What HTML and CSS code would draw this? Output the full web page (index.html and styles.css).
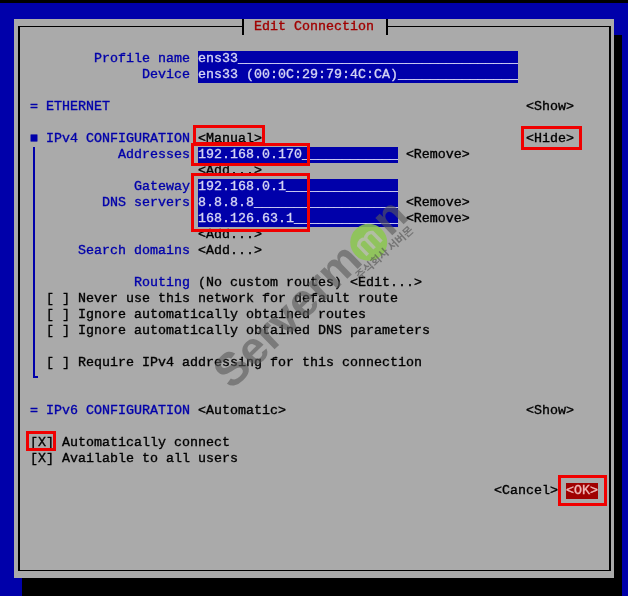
FILE: index.html
```html
<!DOCTYPE html>
<html lang="en">
<head>
<meta charset="utf-8">
<title>Edit Connection</title>
<link rel="stylesheet" href="styles.css">
</head>
<body>
<div class="screen">
  <div class="topbar"></div>
  <div class="dialog">
    <div class="title">Edit Connection</div>
    <div class="frame">
      <div class="row"><span class="label">Profile name</span><span class="field wide">ens33___________________________________</span></div>
      <div class="row"><span class="label">Device</span><span class="field wide">ens33 (00:0C:29:79:4C:CA)_______________</span></div>
      <div class="row"></div>
      <div class="row section"><span class="heading">= ETHERNET</span><span class="end">&lt;Show&gt;</span></div>
      <div class="row"></div>
      <div class="row section"><span class="heading"><span class="mark">■</span> IPv4 CONFIGURATION</span><span class="value">&lt;Manual&gt;</span><span class="end">&lt;Hide&gt;</span></div>
      <div class="ipv4">
        <div class="row"><span class="label">Addresses</span><span class="field">192.168.0.170____________</span><span class="value">&lt;Remove&gt;</span></div>
        <div class="row"><span class="label"></span><span class="value">&lt;Add...&gt;</span></div>
        <div class="row"><span class="label">Gateway</span><span class="field">192.168.0.1______________</span></div>
        <div class="row"><span class="label">DNS servers</span><span class="field">8.8.8.8__________________</span><span class="value">&lt;Remove&gt;</span></div>
        <div class="row"><span class="label"></span><span class="field">168.126.63.1_____________</span><span class="value">&lt;Remove&gt;</span></div>
        <div class="row"><span class="label"></span><span class="value">&lt;Add...&gt;</span></div>
        <div class="row"><span class="label">Search domains</span><span class="value">&lt;Add...&gt;</span></div>
        <div class="row"></div>
        <div class="row"><span class="label">Routing</span><span class="value">(No custom routes) &lt;Edit...&gt;</span></div>
        <div class="row check">[ ] Never use this network for default route</div>
        <div class="row check">[ ] Ignore automatically obtained routes</div>
        <div class="row check">[ ] Ignore automatically obtained DNS parameters</div>
        <div class="row"></div>
        <div class="row check">[ ] Require IPv4 addressing for this connection</div>
        <div class="row"></div>
      </div>
      <div class="row"></div>
      <div class="row section"><span class="heading">= IPv6 CONFIGURATION</span><span class="value">&lt;Automatic&gt;</span><span class="end">&lt;Show&gt;</span></div>
      <div class="row"></div>
      <div class="row section">[X] Automatically connect</div>
      <div class="row section">[X] Available to all users</div>
      <div class="row"></div>
      <div class="row buttons"><span>&lt;Cancel&gt;</span><span class="value ok">&lt;OK&gt;</span></div>
    </div>
  </div>

  <div class="mark-box box-manual"></div>
  <div class="mark-box box-address"></div>
  <div class="mark-box box-dns"></div>
  <div class="mark-box box-hide"></div>
  <div class="mark-box box-auto"></div>
  <div class="mark-box box-ok"></div>

  <div class="watermark">
    <span class="wm-text">Serverm</span>
    <svg class="wm-logo" width="37" height="37" viewBox="0 0 37 37">
      <circle cx="18.500" cy="18.500" r="18.500" fill="#8cc850"/>
      <path d="M9 27V14c3-3 7-3 9.500 0v13M18.500 14c3-3 7-3 9.500 0v13" fill="none" stroke="#b4c2a2" stroke-width="3.500"/>
    </svg>
    <span class="wm-text">n</span>
  </div>
  <div class="wm-sub">주식회사 서버몬</div>
</div>
</body>
</html>
```
FILE: styles.css
```css
* { box-sizing: border-box; }
html, body { margin: 0; height: 100%; overflow: hidden; }
.screen {
  position: relative;
  width: 628px;
  height: 596px;
  overflow: hidden;
  background: #0000aa;
  font: 13.33px/16px "Liberation Mono", monospace;
  -webkit-text-stroke: 0.35px currentColor;
  color: #000;
  filter: blur(0.35px);
}
.topbar { height: 3px; background: #000; }
.dialog {
  position: relative;
  width: 600px;
  margin: 16px 0 0 14px;
  padding: 7px 3px 7px 4px;
  background: #aaa;
  box-shadow: 8px 16px 0 #000, 8px 18px 0 #000;
}
.frame {
  border: solid #000;
  border-width: 1px 2px;
  padding: 24px 0 71px;
}
.title {
  position: absolute;
  left: 228px;
  top: 0;
  width: 146px;
  height: 16px;
  padding-left: 10px;
  background: #aaa;
  border: solid #000;
  border-width: 0 2px;
  color: #a00000;
  white-space: pre;
}
.row {
  display: flex;
  height: 16px;
  padding: 0 35px 0 2px;
  white-space: pre;
}
.label { width: 21ch; text-align: right; color: #0000aa; }
.value { margin-left: 1ch; }
.field {
  width: 25ch;
  margin-left: 1ch;
  background: #0000aa;
  color: #d4d4f4;
  overflow: hidden;
}
.field.wide { width: 40ch; }
.section { padding-left: 10px; }
.heading { color: #0000aa; }
.mark { display: inline-block; width: 8px; }
.end { margin-left: auto; }
.ipv4 {
  background:
    linear-gradient(#0000aa, #0000aa) no-repeat 13px 0 / 2px 231px,
    linear-gradient(#0000aa, #0000aa) no-repeat 13px 229px / 5px 2px;
}
.check { padding-left: 26px; }
.buttons { justify-content: flex-end; padding-right: 11px; }
.ok { background: #a00000; color: #f0b8b8; }

.mark-box { position: absolute; border: 3px solid #f00000; }
.box-manual { left: 193px; top: 125px; width: 72px; height: 20px; }
.box-address { left: 191px; top: 143px; width: 119px; height: 23px; }
.box-dns { left: 191px; top: 173px; width: 119px; height: 59px; }
.box-hide { left: 521px; top: 126px; width: 61px; height: 24px; }
.box-auto { left: 26px; top: 431px; width: 30px; height: 20px; }
.box-ok { left: 558px; top: 475px; width: 49px; height: 31px; }

.watermark {
  position: absolute;
  left: 238px;
  top: 347px;
  display: flex;
  align-items: center;
  height: 50px;
  transform: rotate(-44deg);
  transform-origin: 0 100%;
  font: bold 46px/50px "Liberation Sans", sans-serif;
  -webkit-text-stroke: 0;
  color: rgba(90, 90, 90, 0.6);
}
.wm-logo { flex: none; opacity: 0.85; margin: 8px 0 0 -1px; }
.wm-sub {
  position: absolute;
  left: 347px;
  top: 245px;
  transform: rotate(-42deg);
  font: bold 11px/14px "Noto Sans CJK KR", sans-serif;
  -webkit-text-stroke: 0;
  color: rgba(80, 80, 80, 0.6);
}
```
